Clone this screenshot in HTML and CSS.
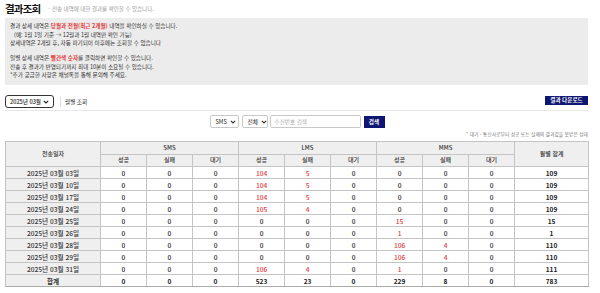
FILE: index.html
```html
<!DOCTYPE html>
<html lang="ko">
<head>
  <meta charset="UTF-8" />
  <meta name="viewport" content="width=device-width, initial-scale=1.0"/>
  <title>결과조회</title>
  <link rel="stylesheet" href="styles.css">
</head>
<body>

<div class="page">

  <!-- 제목 -->
  <div class="title-bar">
    <h1>결과조회</h1>
    <span class="sub">- 전송 내역에 대한 결과를 확인할 수 있습니다.</span>
  </div>

  <!-- 안내 -->
  <div class="info">
    <p>결과 상세 내역은 <b class="red">당월과 전월(최근 2개월)</b> 내역을 확인하실 수 있습니다.</p>
    <p class="indent">(예: 1월 1일 기준 → 12월과 1월 내역만 확인 가능)</p>
    <p>상세내역은 2개월 후, 자동 파기되어 이후에는 조회할 수 없습니다</p>
    <p class="gap">일별 상세 내역은 <b class="red">빨간색 숫자</b>를 클릭하면 확인할 수 있습니다.</p>
    <p>전송 후 결과가 반영되기까지 최대 10분이 소요될 수 있습니다.</p>
    <p>*추가 궁금한 사항은 채널톡을 통해 문의해 주세요.</p>
  </div>

  <!-- 월 선택 -->
  <div class="toolbar">
    <div class="left">
      <div class="select month">2025년 03월
        <svg width="6" height="4" viewBox="0 0 6 4"><path d="M0.8 0.8 L3 3 L5.2 0.8" fill="none" stroke="#222" stroke-width="1.1"/></svg>
      </div>
      <span class="divider"></span>
      <span class="label">월별 조회</span>
    </div>
    <button class="btn">결과 다운로드</button>
  </div>

  <!-- 검색 -->
  <div class="search">
    <div class="select small sel-type">SMS
      <svg width="6" height="4" viewBox="0 0 6 4"><path d="M0.8 0.8 L3 3 L5.2 0.8" fill="none" stroke="#333" stroke-width="1.1"/></svg>
    </div>
    <div class="select small sel-state">전체
      <svg width="6" height="4" viewBox="0 0 6 4"><path d="M0.8 0.8 L3 3 L5.2 0.8" fill="none" stroke="#333" stroke-width="1.1"/></svg>
    </div>
    <input class="keyword" type="text" placeholder="수신번호 검색">
    <button class="btn search-btn">검색</button>
  </div>

  <p class="note">* 대기 - 통신사로부터 성공 또는 실패의 결과값을 못받은 상태</p>

  <!-- 결과 표 -->
  <table class="result">
    <colgroup>
      <col class="c-date">
      <col span="9" class="c-num">
      <col class="c-sum">
    </colgroup>
    <thead>
      <tr>
        <th rowspan="2" class="gray">전송일자</th>
        <th colspan="3">SMS</th>
        <th colspan="3">LMS</th>
        <th colspan="3">MMS</th>
        <th rowspan="2">월별 합계</th>
      </tr>
      <tr>
        <th>성공</th><th>실패</th><th>대기</th>
        <th>성공</th><th>실패</th><th>대기</th>
        <th>성공</th><th>실패</th><th>대기</th>
      </tr>
    </thead>
    <tbody id="rows"></tbody>
  </table>

</div>

<script>
  // 일별 결과 (SMS 성공/실패/대기, LMS ..., MMS ...)
  const dados = [
    ["2025년 03월 03일", [0,0,0, 104,5,0, 0,0,0], 109],
    ["2025년 03월 10일", [0,0,0, 104,5,0, 0,0,0], 109],
    ["2025년 03월 17일", [0,0,0, 104,5,0, 0,0,0], 109],
    ["2025년 03월 24일", [0,0,0, 105,4,0, 0,0,0], 109],
    ["2025년 03월 25일", [0,0,0, 0,0,0, 15,0,0], 15],
    ["2025년 03월 26일", [0,0,0, 0,0,0, 1,0,0], 1],
    ["2025년 03월 28일", [0,0,0, 0,0,0, 106,4,0], 110],
    ["2025년 03월 29일", [0,0,0, 0,0,0, 106,4,0], 110],
    ["2025년 03월 31일", [0,0,0, 106,4,0, 1,0,0], 111]
  ];

  let html = '';
  for (let i = 0; i < dados.length; i++) {
    const linha = dados[i];
    html += '<tr><td class="gray">' + linha[0] + '</td>';
    for (let j = 0; j < linha[1].length; j++) {
      const v = linha[1][j];
      // 대기 칸은 클릭 불가, 나머지 0 아닌 값은 빨간색
      const red = v > 0 && j % 3 !== 2;
      html += '<td' + (red ? ' class="red"' : '') + '>' + v + '</td>';
    }
    html += '<td class="bold">' + linha[2] + '</td></tr>';
  }
  html += '<tr class="total"><td class="gray">합계</td>' +
    [0,0,0, 523,23,0, 229,8,0, 783].map(v => '<td>' + v + '</td>').join('') + '</tr>';

  document.getElementById('rows').innerHTML = html;
</script>

</body>
</html>
```

FILE: styles.css
```css
* {
    margin: 0;
    padding: 0;
    box-sizing: border-box;
    font-family: "Noto Sans CJK KR", "Noto Sans", sans-serif;
    color: #222;
}

body {
    background: #fff;
}

.page {
    width: 583px;
    margin-left: 5px;
}

.title-bar {
    height: 18px;
    display: flex;
    align-items: center;
    padding-bottom: 1px;
}

.title-bar h1 {
    font-size: 10.5px;
    font-weight: 700;
    letter-spacing: -0.8px;
    line-height: 12px;
    color: #111;
}

.title-bar .sub {
    font-size: 5.5px;
    color: #999;
    margin-left: 8px;
    padding-top: 1px;
}

.info {
    height: 67px;
    background-color: #ececec;
    padding: 4px 5px;
}

.info p {
    font-size: 5.6px;
    line-height: 8.5px;
    color: #333;
}

.info .indent {
    padding-left: 4px;
}

.info .gap {
    margin-top: 6.5px;
}

.red {
    color: #e03a3a;
}

b.red {
    font-weight: 700;
}

.toolbar {
    display: flex;
    justify-content: space-between;
    align-items: center;
    padding: 10px 0 2px 0;
    border-bottom: 1px solid #e8e8e8;
}

.toolbar .left {
    display: flex;
    align-items: center;
}

.select {
    display: flex;
    align-items: center;
    justify-content: space-between;
    white-space: nowrap;
    border: 1px solid #c8c8c8;
    border-radius: 2px;
    background: #fff;
    font-size: 5.6px;
}

.select.month {
    width: 49px;
    height: 13px;
    padding: 0 4px 0 4px;
    border: 1px solid #333;
    border-radius: 3px;
    font-weight: 500;
}

.divider {
    width: 1px;
    height: 10px;
    background: #ddd;
    margin: 0 4px 0 6px;
}

.label {
    font-size: 5.6px;
}

.btn {
    background-color: #0d1670;
    color: #fff;
    border: none;
    font-size: 5.6px;
    font-weight: 700;
    height: 9px;
    padding: 0 4px;
    line-height: 9px;
    white-space: nowrap;
}

.toolbar .btn {
    width: 43px;
    margin-bottom: 2px;
}

.search {
    display: flex;
    justify-content: center;
    align-items: center;
    gap: 2px;
    margin-top: 4px;
    height: 13px;
    padding-left: 1px;
}

.select.small {
    height: 13px;
    padding: 0 2px 0 5px;
    gap: 3px;
    flex-shrink: 0;
}

.sel-type {
    width: 29px;
    margin-right: 1px;
}

.sel-state {
    width: 26px;
}

.select svg {
    flex-shrink: 0;
}

.keyword {
    width: 91px;
    height: 13px;
    border: 1px solid #c8c8c8;
    border-radius: 2px;
    font-size: 5.6px;
    padding: 0 4px;
    outline: none;
}

.keyword::placeholder {
    color: #aaa;
}

.search-btn {
    width: 21px;
    height: 12px;
    padding: 0;
    line-height: 12px;
    margin-left: 1px;
}

.note {
    text-align: right;
    font-size: 4.8px;
    line-height: 6px;
    color: #777;
    margin-top: 3px;
}

.result {
    width: 583px;
    table-layout: fixed;
    border-collapse: collapse;
    margin-top: 4px;
    border-top: 1px solid #aaa;
}

.c-date { width: 95px; }
.c-num { width: 46px; }
.c-sum { width: 74px; }

.result th,
.result td {
    border: 1px solid #c4c4c4;
    text-align: center;
    vertical-align: middle;
    font-size: 6.6px;
    line-height: 8px;
    padding: 0;
}

.result th {
    height: 12.5px;
    background-color: #efefef;
    font-weight: 500;
    font-size: 6px;
    color: #333;
}

.result td {
    height: 12px;
    font-weight: 500;
    color: #222;
}

.result td.gray {
    background-color: #efefef;
    color: #333;
}

.result td.red {
    color: #e03a3a;
}

.result td.bold {
    font-weight: 700;
}

.result .total td {
    font-weight: 700;
    border-bottom: 1px solid #aaa;
}
```
